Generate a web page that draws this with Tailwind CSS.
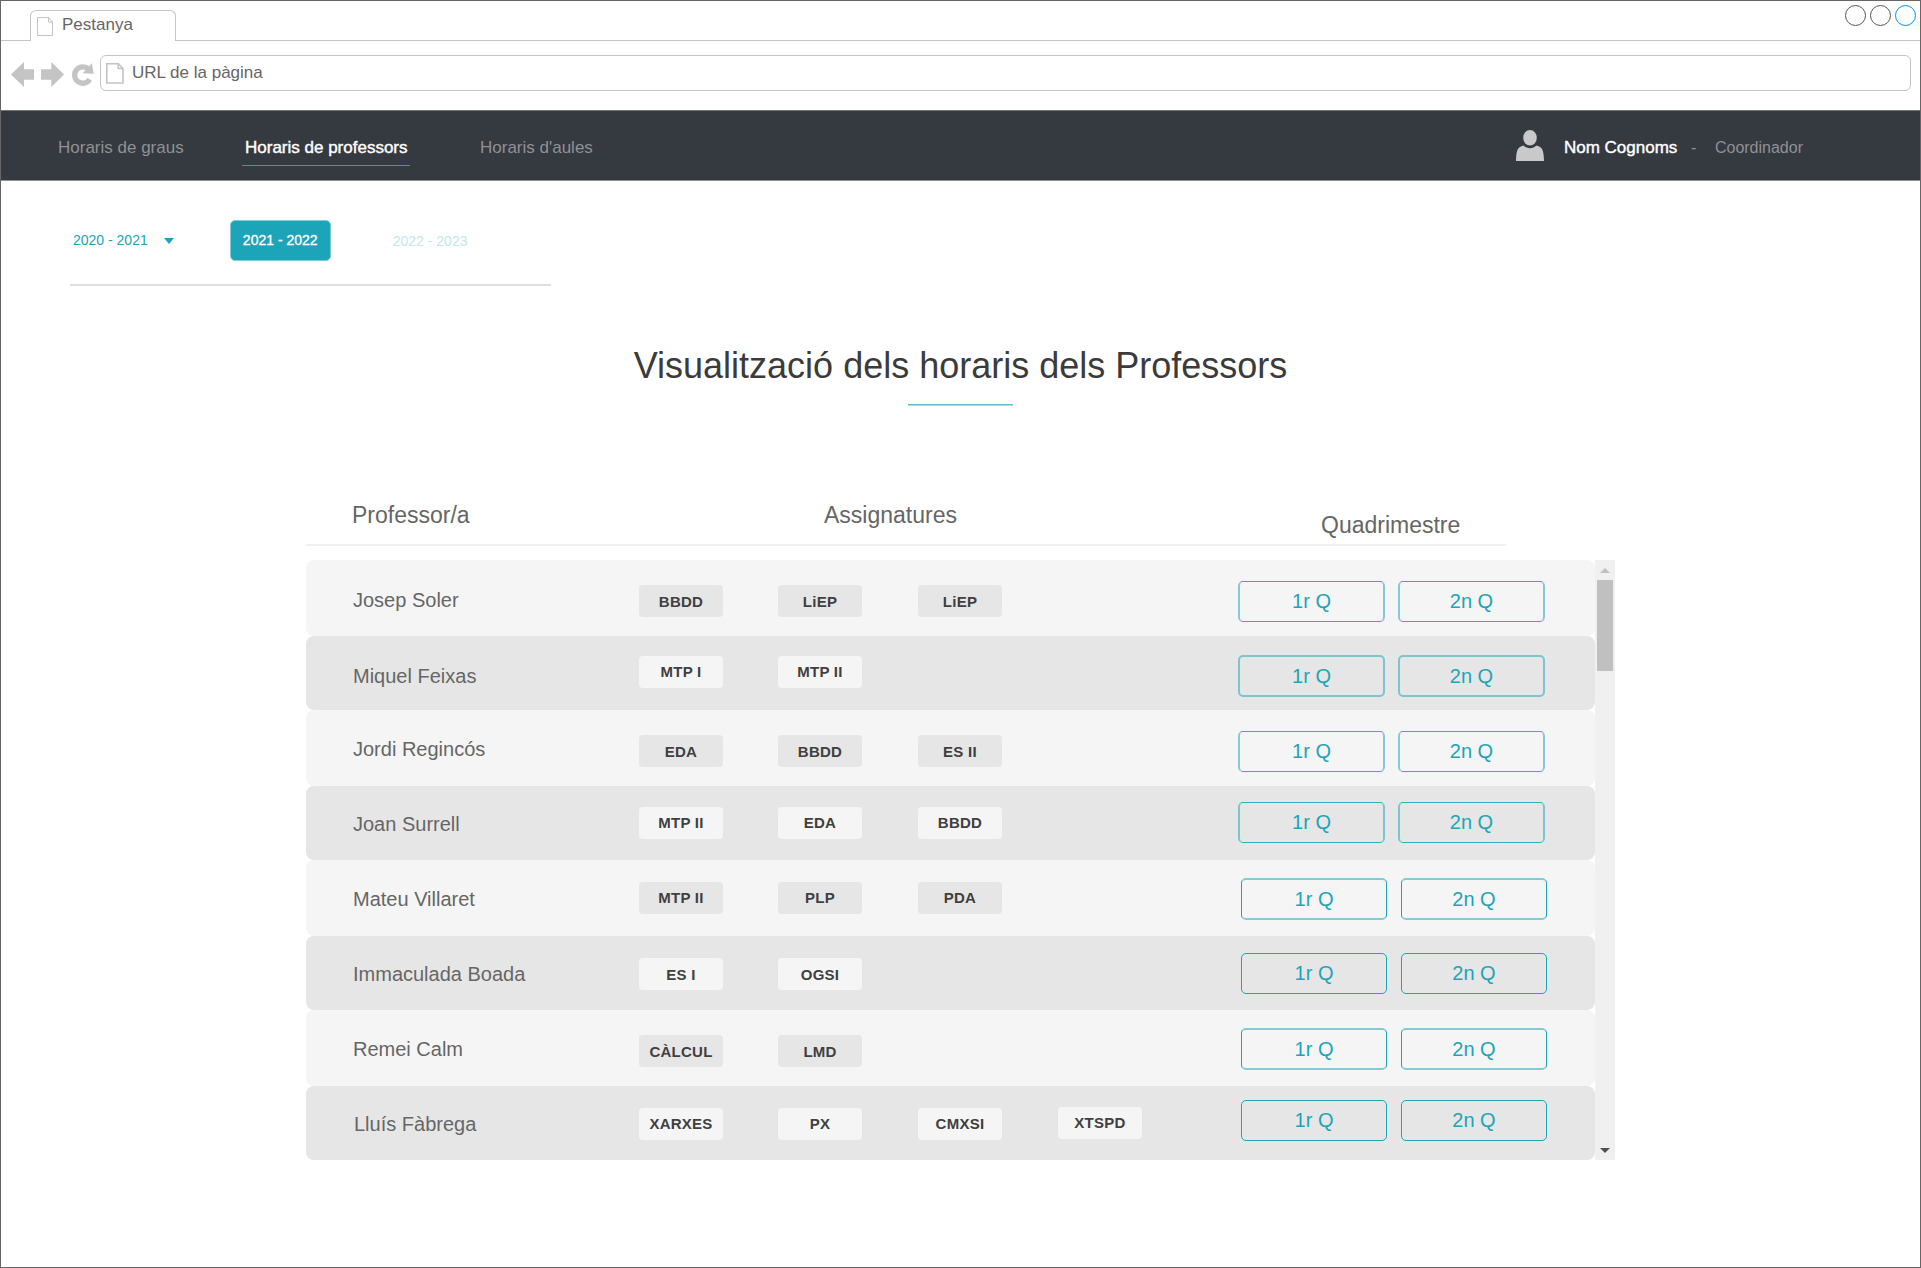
<!DOCTYPE html>
<html lang="ca">
<head>
<meta charset="utf-8">
<title>Horaris de professors</title>
<script src="https://cdn.jsdelivr.net/npm/@tailwindcss/browser@4"></script>
</head>
<body class="bg-white">
<div class="flex h-[1268px] w-[1921px] flex-col overflow-hidden border border-[#666] bg-white font-['Liberation_Sans',Arial,sans-serif] text-[#666]">

  <!-- Tab strip -->
  <div class="flex h-10 shrink-0 items-end border-b border-[#c4c4c4] pl-[29px]">
    <div class="-mb-px flex h-[31px] w-[146px] items-start rounded-t-md border border-b-0 border-[#c4c4c4] bg-white pl-[6px]">
      <svg class="mt-[6px] h-[20px] w-[17px]" viewBox="0 0 17 20" fill="none" stroke="#c4c4c4"><path d="M.5.5H11.5L15.5 5V18.5H.5ZM11.5.5V5H15.5"/></svg>
      <span class="ml-[8px] mt-[5px] text-[17px] leading-[17px]">Pestanya</span>
    </div>
    <div class="mr-1 mt-1 ml-auto flex gap-1 self-start">
      <div class="size-[21px] rounded-full border border-[#555]"></div>
      <div class="size-[21px] rounded-full border border-[#555]"></div>
      <div class="size-[21px] rounded-full border border-[#008cff]"></div>
    </div>
  </div>

  <!-- Address bar -->
  <div class="flex h-[69px] shrink-0 items-start pl-[10px]">
    <svg class="mt-[21px] h-[25px] w-[24px]" viewBox="0 0 24 25" fill="#c4c4c4"><path d="M0 12.5 13 0V7.3H23V17.7H13V25Z"/></svg>
    <svg class="ml-[6px] mt-[21px] h-[25px] w-[24px]" viewBox="0 0 24 25" fill="#c4c4c4"><path d="M23 12.5 10.3 0V7.3H0V17.7H10.3V25Z"/></svg>
    <svg class="ml-[7px] mt-[22px] h-[24px] w-[22px]" viewBox="0 0 22 24"><path d="M16.6 6.2A8.2 8.2 0 1 0 17.8 16.4" fill="none" stroke="#c4c4c4" stroke-width="5.4"/><path d="M19.8.3 21.8 10.8 10.6 10.2Z" fill="#c4c4c4"/></svg>
    <div class="ml-[6px] mt-[14px] flex h-9 w-[1811px] items-start rounded-md border border-[#c4c4c4] pl-[5px]">
      <svg class="mt-[7px] h-[21px] w-[18px]" viewBox="0 0 18 21" fill="none" stroke="#c4c4c4" stroke-width="1.6"><path d="M.8.8H12.5L17 5.5V20H.8ZM12.3.8V5.5H17"/></svg>
      <span class="ml-[8px] mt-[8px] text-[17px] leading-[17px]">URL de la pàgina</span>
    </div>
  </div>

  <!-- Navigation -->
  <nav class="flex h-[71px] shrink-0 items-start border-t border-b border-t-[#6f7276] border-b-[#8f9194] bg-[#353940] text-[17px] leading-[17px] text-[#8f9194]">
    <a class="ml-[57px] mt-[28px] w-[184px]">Horaris de graus</a>
    <a class="mt-[28px] h-[27px] w-[168px] border-b border-[#1ca5b8] pl-[3px] whitespace-nowrap text-white [-webkit-text-stroke:0.4px_white]">Horaris de professors</a>
    <a class="ml-[70px] mt-[28px]">Horaris d'aules</a>
    <svg class="ml-auto mt-[19px] h-[31px] w-[28px]" viewBox="0 0 28 31" fill="#c9c9c9"><ellipse cx="14" cy="7.7" rx="6.8" ry="7.7"/><path d="M0 31C.2 22 1 17 7.5 15.6C11 19 17 19 20.500 15.6C27 17 27.800 22 28 31Z"/></svg>
    <span class="ml-[20px] mt-[28px] w-[127px] text-white [-webkit-text-stroke:0.4px_white]">Nom Cognoms</span>
    <span class="mt-[28px] w-[24px] text-[16px]">-</span>
    <span class="mt-[28px] mr-[117px] text-[16px]">Coordinador</span>
  </nav>

  <!-- Academic years -->
  <div class="ml-[69px] flex h-[105px] w-[481px] shrink-0 items-start border-b-2 border-[#dedede] text-[14px] leading-[14px] text-[#1ca5b8]">
    <span class="ml-[3px] mt-[52px]">2020 - 2021</span>
    <svg class="ml-[16px] mt-[57px] h-[6px] w-[10px]" viewBox="0 0 10 6" fill="#1ca5b8"><path d="M0 0H10L5 6Z"/></svg>
    <div class="ml-[56px] mt-[39px] flex h-[41px] w-[101px] justify-center rounded-[5px] border border-[#7fccd7] bg-[#1ca5b8] pt-[12px] text-white [-webkit-text-stroke:0.3px_white]">2021 - 2022</div>
    <span class="ml-[62px] mt-[53px] text-[#bfe8ee]">2022 - 2023</span>
  </div>

  <!-- Title -->
  <h1 class="mt-[62px] shrink-0 text-center text-[36px] leading-[36px] text-[#3b3b3b]">Visualització dels horaris dels Professors</h1>
  <div class="mx-auto mt-[20px] h-[2px] w-[105px] shrink-0 border-t border-[#5fc0cf] bg-[#a8dbe3]"></div>

  <!-- Table header -->
  <div class="ml-[305px] mt-[98px] flex h-[42px] w-[1200px] shrink-0 items-start border-b-2 border-[#f0f0f0] text-[23px] leading-[23px]">
    <span class="ml-[46px] w-[472px]">Professor/a</span>
    <span class="w-[497px]">Assignatures</span>
    <span class="mt-[10px]">Quadrimestre</span>
  </div>

  <!-- Table body -->
  <div class="ml-[305px] mt-[14px] flex h-[600px] shrink-0">
    <div class="w-[1289px] text-[20px] leading-[20px]">

      <div class="flex h-[76px] items-start rounded-lg bg-[#f5f5f5]">
        <span class="ml-[47px] mt-[30px] w-[286px]">Josep Soler</span>
        <div class="mt-[25px] flex w-[599px] items-start text-center text-[15px] leading-[32px] font-bold tracking-[0.25px] text-[#404040]">
          <span class="h-8 w-[84px] rounded bg-[#e6e6e6] pt-px">BBDD</span>
          <span class="ml-[55px] h-8 w-[84px] rounded bg-[#e6e6e6] pt-px">LiEP</span>
          <span class="ml-[56px] h-8 w-[84px] rounded bg-[#e6e6e6] pt-px">LiEP</span>
        </div>
        <div class="mt-[21px] flex gap-[13px] text-center leading-[39px] text-[#1ca5b8]">
          <span class="h-[41px] w-[147px] rounded-[5px] border-x-2 border-y border-x-[#84cad5] border-y-[#35adbe]">1r Q</span>
          <span class="h-[41px] w-[147px] rounded-[5px] border-x-2 border-y border-x-[#84cad5] border-y-[#35adbe]">2n Q</span>
        </div>
      </div>

      <div class="flex h-[74px] items-start rounded-lg bg-[#e6e6e6]">
        <span class="ml-[47px] mt-[30px] w-[286px]">Miquel Feixas</span>
        <div class="mt-[20px] flex w-[599px] items-start text-center text-[15px] leading-[32px] font-bold tracking-[0.25px] text-[#404040]">
          <span class="h-8 w-[84px] rounded bg-[#f5f5f5]">MTP I</span>
          <span class="ml-[55px] h-8 w-[84px] rounded bg-[#f5f5f5]">MTP II</span>
        </div>
        <div class="mt-[19px] flex gap-[13px] text-center leading-[38px] text-[#1ca5b8]">
          <span class="h-[42px] w-[147px] rounded-[5px] border-2 border-[#7cc4cf]">1r Q</span>
          <span class="h-[42px] w-[147px] rounded-[5px] border-2 border-[#7cc4cf]">2n Q</span>
        </div>
      </div>

      <div class="flex h-[76px] items-start rounded-lg bg-[#f5f5f5]">
        <span class="ml-[47px] mt-[29px] w-[286px]">Jordi Regincós</span>
        <div class="mt-[25px] flex w-[599px] items-start text-center text-[15px] leading-[32px] font-bold tracking-[0.25px] text-[#404040]">
          <span class="h-8 w-[84px] rounded bg-[#e6e6e6] pt-px">EDA</span>
          <span class="ml-[55px] h-8 w-[84px] rounded bg-[#e6e6e6] pt-px">BBDD</span>
          <span class="ml-[56px] h-8 w-[84px] rounded bg-[#e6e6e6] pt-px">ES II</span>
        </div>
        <div class="mt-[21px] flex gap-[13px] text-center leading-[39px] text-[#1ca5b8]">
          <span class="h-[41px] w-[147px] rounded-[5px] border-x-2 border-y border-x-[#84cad5] border-y-[#35adbe]">1r Q</span>
          <span class="h-[41px] w-[147px] rounded-[5px] border-x-2 border-y border-x-[#84cad5] border-y-[#35adbe]">2n Q</span>
        </div>
      </div>

      <div class="flex h-[74px] items-start rounded-lg bg-[#e6e6e6]">
        <span class="ml-[47px] mt-[28px] w-[286px]">Joan Surrell</span>
        <div class="mt-[21px] flex w-[599px] items-start text-center text-[15px] leading-[32px] font-bold tracking-[0.25px] text-[#404040]">
          <span class="h-8 w-[84px] rounded bg-[#f5f5f5]">MTP II</span>
          <span class="ml-[55px] h-8 w-[84px] rounded bg-[#f5f5f5]">EDA</span>
          <span class="ml-[56px] h-8 w-[84px] rounded bg-[#f5f5f5]">BBDD</span>
        </div>
        <div class="mt-[16px] flex gap-[13px] text-center leading-[39px] text-[#1ca5b8]">
          <span class="h-[41px] w-[147px] rounded-[5px] border-x-2 border-y border-x-[#7cc4cf] border-y-[#35adbe]">1r Q</span>
          <span class="h-[41px] w-[147px] rounded-[5px] border-x-2 border-y border-x-[#7cc4cf] border-y-[#35adbe]">2n Q</span>
        </div>
      </div>

      <div class="flex h-[76px] items-start rounded-lg bg-[#f5f5f5]">
        <span class="ml-[47px] mt-[29px] w-[286px]">Mateu Villaret</span>
        <div class="mt-[22px] flex w-[602px] items-start text-center text-[15px] leading-[32px] font-bold tracking-[0.25px] text-[#404040]">
          <span class="h-8 w-[84px] rounded bg-[#e6e6e6]">MTP II</span>
          <span class="ml-[55px] h-8 w-[84px] rounded bg-[#e6e6e6]">PLP</span>
          <span class="ml-[56px] h-8 w-[84px] rounded bg-[#e6e6e6]">PDA</span>
        </div>
        <div class="mt-[18px] flex gap-[14px] text-center leading-[38px] text-[#1ca5b8]">
          <span class="h-[42px] w-[146px] rounded-[5px] border-x border-y-2 border-x-[#1ca5b8] border-y-[#84cad5]">1r Q</span>
          <span class="h-[42px] w-[146px] rounded-[5px] border-x border-y-2 border-x-[#1ca5b8] border-y-[#84cad5]">2n Q</span>
        </div>
      </div>

      <div class="flex h-[74px] items-start rounded-lg bg-[#e6e6e6]">
        <span class="ml-[47px] mt-[28px] w-[286px]">Immaculada Boada</span>
        <div class="mt-[22px] flex w-[602px] items-start text-center text-[15px] leading-[32px] font-bold tracking-[0.25px] text-[#404040]">
          <span class="h-8 w-[84px] rounded bg-[#f5f5f5] pt-px">ES I</span>
          <span class="ml-[55px] h-8 w-[84px] rounded bg-[#f5f5f5] pt-px">OGSI</span>
        </div>
        <div class="mt-[17px] flex gap-[14px] text-center leading-[39px] text-[#1ca5b8]">
          <span class="h-[41px] w-[146px] rounded-[5px] border border-[#1ca5b8]">1r Q</span>
          <span class="h-[41px] w-[146px] rounded-[5px] border border-[#1ca5b8]">2n Q</span>
        </div>
      </div>

      <div class="flex h-[76px] items-start rounded-lg bg-[#f5f5f5]">
        <span class="ml-[47px] mt-[29px] w-[286px]">Remei Calm</span>
        <div class="mt-[25px] flex w-[602px] items-start text-center text-[15px] leading-[32px] font-bold tracking-[0.25px] text-[#404040]">
          <span class="h-8 w-[84px] rounded bg-[#e6e6e6] pt-px">CÀLCUL</span>
          <span class="ml-[55px] h-8 w-[84px] rounded bg-[#e6e6e6] pt-px">LMD</span>
        </div>
        <div class="mt-[18px] flex gap-[14px] text-center leading-[38px] text-[#1ca5b8]">
          <span class="h-[42px] w-[146px] rounded-[5px] border-x border-y-2 border-x-[#1ca5b8] border-y-[#84cad5]">1r Q</span>
          <span class="h-[42px] w-[146px] rounded-[5px] border-x border-y-2 border-x-[#1ca5b8] border-y-[#84cad5]">2n Q</span>
        </div>
      </div>

      <div class="flex h-[74px] items-start rounded-lg bg-[#e6e6e6]">
        <span class="ml-[48px] mt-[28px] w-[285px]">Lluís Fàbrega</span>
        <div class="mt-[22px] flex w-[602px] items-start text-center text-[15px] leading-[32px] font-bold tracking-[0.25px] text-[#404040]">
          <span class="h-8 w-[84px] rounded bg-[#f5f5f5]">XARXES</span>
          <span class="ml-[55px] h-8 w-[84px] rounded bg-[#f5f5f5]">PX</span>
          <span class="ml-[56px] h-8 w-[84px] rounded bg-[#f5f5f5]">CMXSI</span>
          <span class="-mt-px ml-[56px] h-8 w-[84px] rounded bg-[#f5f5f5]">XTSPD</span>
        </div>
        <div class="mt-[14px] flex gap-[14px] text-center leading-[39px] text-[#1ca5b8]">
          <span class="h-[41px] w-[146px] rounded-[5px] border border-[#1ca5b8]">1r Q</span>
          <span class="h-[41px] w-[146px] rounded-[5px] border border-[#1ca5b8]">2n Q</span>
        </div>
      </div>
    </div>

    <!-- Scrollbar -->
    <div class="flex w-5 flex-col items-center bg-[#f0f0f0]">
      <svg class="mt-2 h-[5px] w-[10px] shrink-0" viewBox="0 0 10 5" fill="#c0c0c0"><path d="M0 5H10L5 0Z"/></svg>
      <div class="mt-[7px] h-[91px] w-4 bg-[#c0c0c0]"></div>
      <svg class="mt-auto mb-[7px] h-[5px] w-[10px] shrink-0" viewBox="0 0 10 5" fill="#505050"><path d="M0 0H10L5 5Z"/></svg>
    </div>
  </div>
</div>
</body>
</html>
